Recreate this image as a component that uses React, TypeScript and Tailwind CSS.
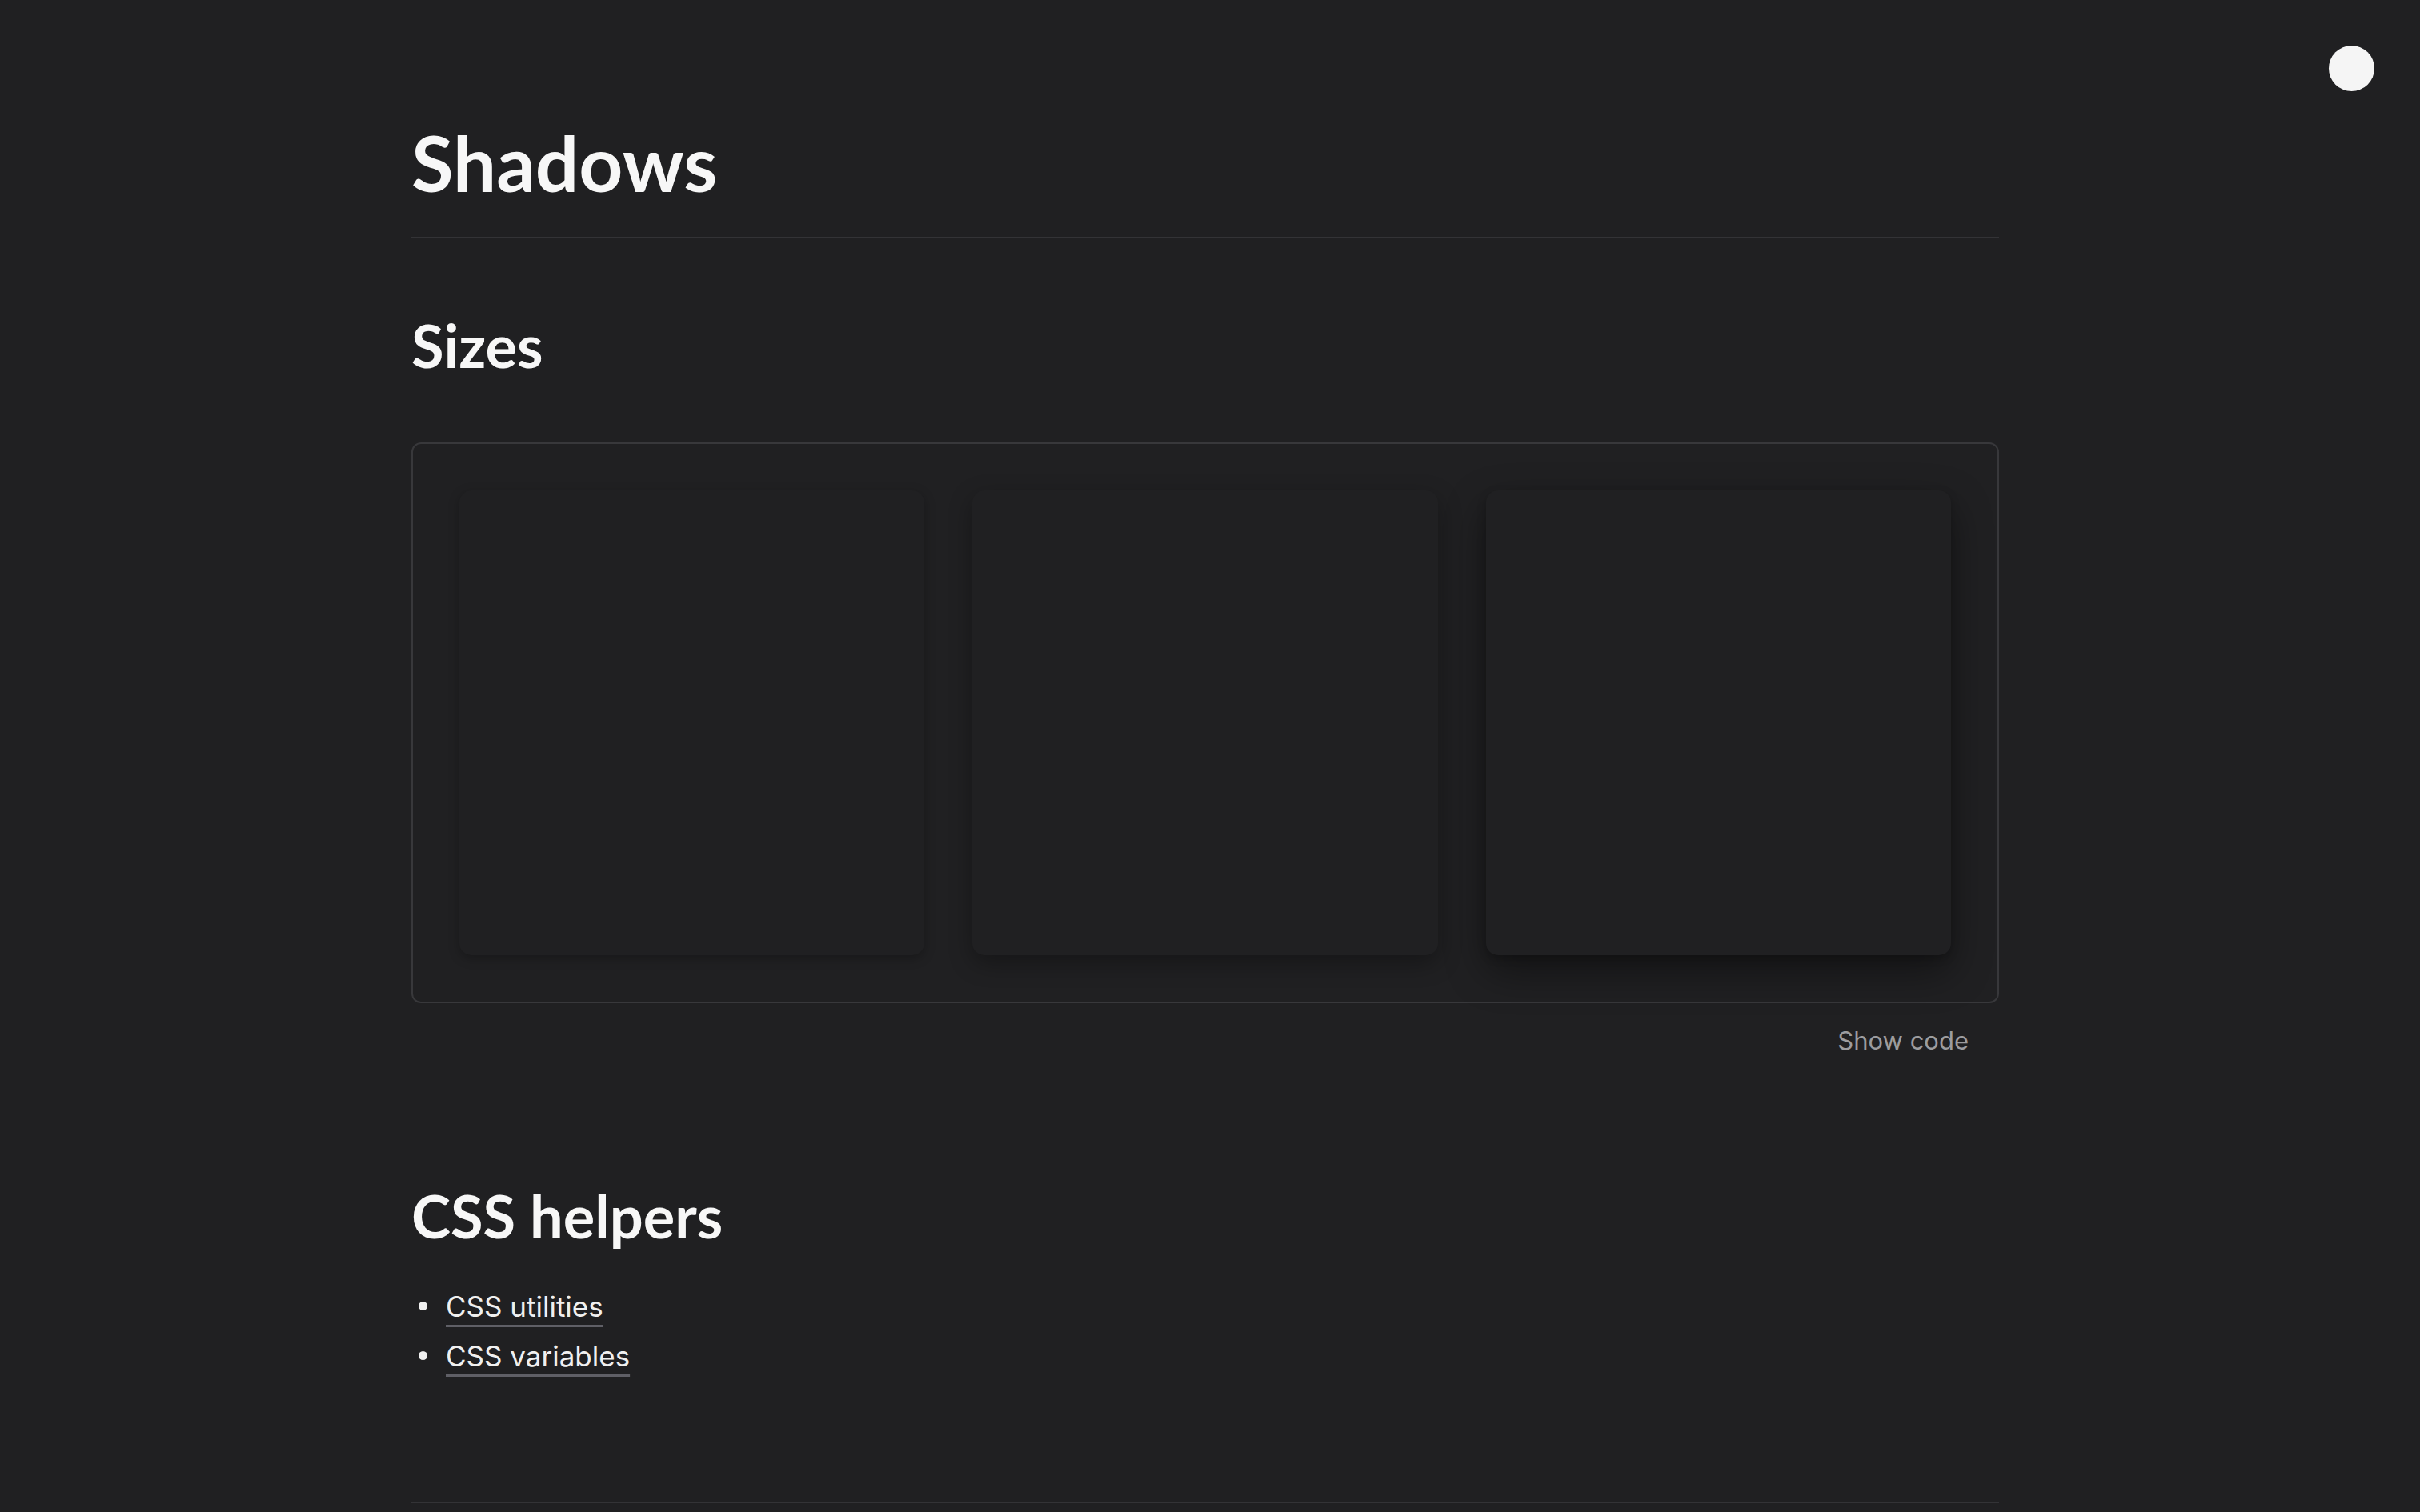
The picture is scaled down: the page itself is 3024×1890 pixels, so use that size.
export default function App() {
  const heading = { fontFamily: "Lato, 'Noto Sans', sans-serif" }
  const body = { fontFamily: "Inter, 'Noto Sans', sans-serif" }

  return (
    <div className="relative min-h-[1890px] bg-[#202022] text-[#f7f7f7]" style={body}>
      {/* ===== THEME DOT ===== */}
      <div className="absolute left-[2910px] top-[57px] h-[57px] w-[57px] rounded-full bg-[#f5f5f5]" />

      <div className="ml-[514px] flex w-[1984px] flex-col pt-[146px] pb-[12px]">
        {/* ===== TITLE ===== */}
        <h1 className="text-[96px] font-bold leading-[114px]" style={heading}>
          Shadows
        </h1>
        <div className="mt-[36px] h-[2px] bg-[#333336]" />

        {/* ===== SIZES ===== */}
        <h2 className="mt-[89px] text-[74px] font-bold leading-[89px]" style={heading}>
          Sizes
        </h2>

        <div className="mt-[77px] grid grid-cols-3 gap-[60px] rounded-[12px] border-2 border-[#38383b] p-[58px]">
          <div className="aspect-square rounded-[15px] bg-[#202022] shadow-[0_4px_14px_rgba(0,0,0,0.26)]" />
          <div className="aspect-square rounded-[15px] bg-[#202022] shadow-[0_10px_30px_rgba(0,0,0,0.32)]" />
          <div className="aspect-square rounded-[15px] bg-[#202022] shadow-[0_20px_50px_rgba(0,0,0,0.42),0_4px_12px_rgba(0,0,0,0.2)]" />
        </div>

        <div className="mt-[27px] flex justify-end pr-[38px]">
          <span className="text-[31px] leading-[40px] text-[#9c9c9f]">Show code</span>
        </div>

        {/* ===== CSS HELPERS ===== */}
        <h2 className="mt-[154px] text-[74px] font-bold leading-[89px]" style={heading}>
          CSS helpers
        </h2>

        <ul className="mt-[38px] flex flex-col">
          {["CSS utilities", "CSS variables"].map((item) => (
            <li key={item} className="flex items-center text-[35px] leading-[62px] text-[#f0f0f0]">
              <span className="ml-[9px] mt-[-2px] h-[11px] w-[11px] rounded-full bg-[#f0f0f0]" />
              <span className="ml-[23px] underline decoration-[#5f5f66] decoration-[3px] underline-offset-[10px]">
                {item}
              </span>
            </li>
          ))}
        </ul>

        {/* ===== FOOTER ===== */}
        <div className="mt-[151px] h-[2px] bg-[#333336]" />
      </div>
    </div>
  )
}
